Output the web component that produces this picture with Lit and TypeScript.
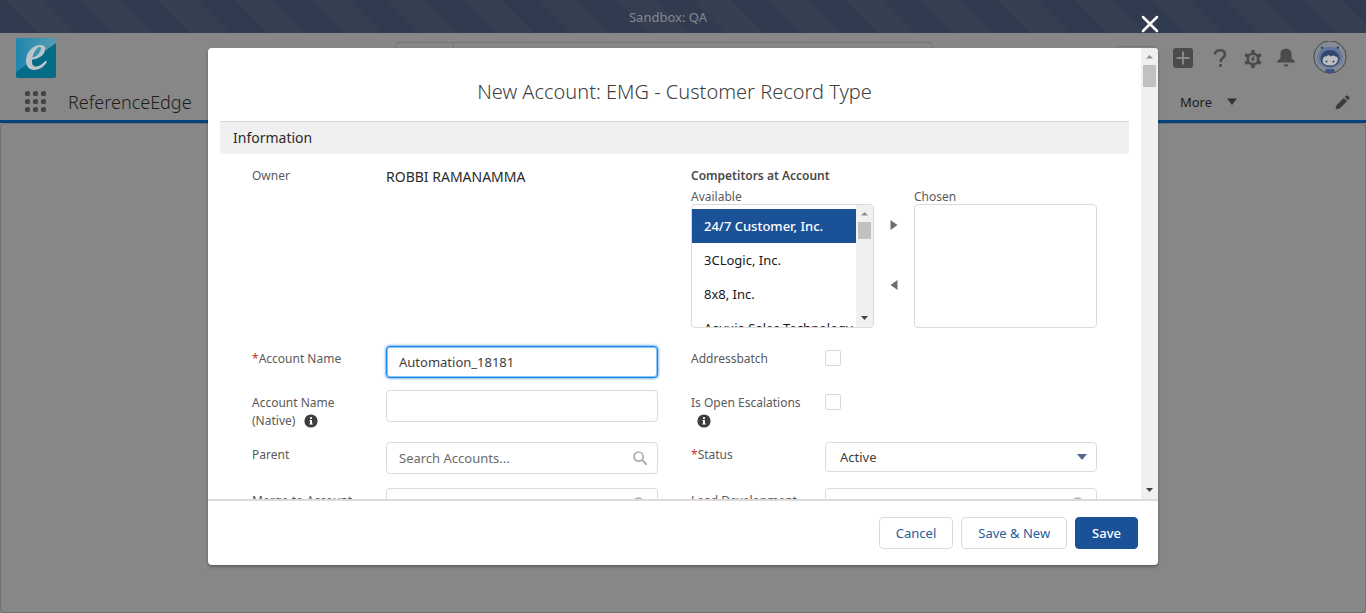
import { LitElement, html, css, svg } from "lit";
import { customElement } from "lit/decorators.js";

const up = html`<svg class="cap" viewBox="0 0 17 17" width="17" height="17"><path d="M5 10.500h7L8.500 7z" fill="#8f8f8f"/></svg>`;
const down = html`<svg class="cap" viewBox="0 0 17 17" width="17" height="17"><path d="M5 6h7l-3.500 4z" fill="#444"/></svg>`;
const info = html`<svg class="info" viewBox="0 0 14 14" width="14" height="14"><circle cx="7" cy="7" r="6.600" fill="#3e3e3c"/><path d="M6 3.200h2v1.700H6zM5.500 5.900H8v3.500h.7v1H5.400v-1H6V6.900h-.5z" fill="#fff"/></svg>`;
const lens = html`<svg class="lens" viewBox="0 0 14 14" width="14" height="14" fill="none" stroke="#b0adab"><circle cx="5.600" cy="5.600" r="4.600" stroke-width="1.700"/><path d="M9 9l4 4" stroke-width="2" stroke-linecap="round"/></svg>`;

@customElement("app-root")
export class AppRoot extends LitElement {
  static styles = css`
    :host { display: block; font-family: "Noto Sans", sans-serif; font-size: 13px; line-height: 18px; color: #3e3e3c; }
    * { box-sizing: border-box; }
    button, input, select { font: inherit; color: inherit; margin: 0; }
    button { border: 0; background: none; padding: 0; cursor: pointer; display: flex; align-items: center; justify-content: center; }
    .page { position: relative; height: 100vh; display: flex; flex-direction: column; background: #878787; overflow: hidden; }
    .band { height: 33px; display: flex; align-items: center; justify-content: center; padding-right: 30px; color: #85888d;
      background: repeating-linear-gradient(45deg, #303b4f 0 27px, #343f52 27px 54px); }
    .top { height: 50px; display: flex; align-items: center; padding: 0 19px 0 16px; }
    .logo { width: 40px; height: 40px; flex: none; }
    .search { flex: 0 1 538px; height: 34px; margin: 9px 0 0 339px; align-self: flex-start; border: 1px solid #767676; border-radius: 4px; display: flex; }
    .scope { width: 58px; border-right: 1px solid #767676; }
    .tools { display: flex; align-items: center; gap: 13px; margin-left: auto; }
    .fav { width: 41px; height: 24px; border: 1px solid #767676; border-radius: 4px; margin-right: 4px; }
    .add { margin-right: 4px; }
    .me { margin-left: 4px; }
    .nav { height: 40px; border-bottom: 3px solid #04427c; display: flex; align-items: center; padding: 0 14px 0 24px; color: #1d1d1d; }
    .app { font-size: 18px; font-weight: 300; padding-left: 20px; flex: 1; }
    .more { gap: 14px; margin-right: 94px; }
    .canvas { flex: 1; border: 1px solid #717171; border-radius: 4px; }
    .overlay { position: absolute; inset: 0; display: flex; flex-direction: column; align-items: center; padding: 48px 16px; }
    .close { position: absolute; left: 50%; top: 15px; margin-left: 458px; width: 18px; height: 18px; }
    .dialog { width: 100%; max-width: 950px; flex: 1; min-height: 0; background: #fff; border-radius: 4px; box-shadow: 0 2px 3px rgba(0,0,0,.3); display: flex; flex-direction: column; overflow: hidden; }
    .body { flex: 1; min-height: 0; display: flex; }
    .form { flex: 1; min-width: 0; overflow: hidden; padding: 0 12px; }
    .bar { width: 17px; background: #f0f0f0; display: flex; flex-direction: column; align-items: center; }
    .thumb { width: 13px; background: #c1c1c1; }
    .cap, .thumb { flex: none; }
    .space { flex: 1; }
    h2 { margin: 0; height: 74px; padding-top: 28px; line-height: 32px; font-size: 20px; font-weight: 300; text-align: center; border-bottom: 1px solid #d8d8d8; }
    h3 { margin: 0 0 12px; height: 32px; line-height: 32px; padding: 0 13px; background: #f0f0f0; border-radius: 0 0 4px 4px; font-size: 14px; font-weight: 400; color: #2b2b2b; }
    .grid { display: grid; grid-template-columns: 1fr 1fr; column-gap: 33px; padding: 0 32px; }
    .field { display: grid; grid-template-columns: 134px 1fr; }
    .label { font-size: 12px; color: #5a5a5a; padding: 4px 16px 0 0; }
    .static { padding-top: 1px; }
    .req { color: #c23934; }
    .r1 { height: 180px; } .r2 { height: 44px; } .r3 { height: 52px; } .r4 { height: 46px; }
    .info { vertical-align: -3px; margin-left: 6px; }
    .static + .owner { font-size: 14px; padding-top: 2px; color: #2b2b2b; }
    .box { width: 100%; height: 32px; border: 1px solid #dddbda; border-radius: 4px; padding: 0 12px; background: #fff; outline: 0; }
    .box::placeholder { color: #6b6b6b; opacity: 1; }
    .focus { border-color: #1589ee; box-shadow: 0 0 3px #0070d2, inset 0 0 0 1px #8ec5f5; }
    .wrap { position: relative; }
    .lens { position: absolute; right: 11px; top: 9px; }
    .pick { appearance: none; height: 30px; padding: 0 14px; }
    .tri { position: absolute; right: 10px; top: 12px; }
    .check { appearance: none; width: 16px; height: 16px; margin-top: 4px; border: 1px solid #dddbda; border-radius: 2px; background: #fff; }
    .group { border: 0; margin: 0; padding: 0; min-width: 0; }
    legend { padding: 0; font-size: 12px; font-weight: 600; line-height: 20px; color: #4a4a4a; }
    .duel { display: grid; grid-template-columns: 1fr 40px 1fr; }
    .cap-label { font-size: 12px; line-height: 18px; color: #5a5a5a; margin-top: 2px; display: block; }
    .list { height: 124px; border: 1px solid #dddbda; border-radius: 4px; display: flex; overflow: hidden; margin-top: -2px; }
    .items { list-style: none; margin: 0; padding: 4px 0; flex: 1; min-width: 0; overflow: hidden; color: #181818; }
    .item { height: 34px; line-height: 34px; padding-left: 12px; white-space: nowrap; overflow: hidden; }
    .sel { background: #1b5297; color: #fff; font-weight: 500; }
    .arrows { display: flex; flex-direction: column; gap: 44px; padding-top: 31px; align-items: center; }
    .arrow { width: 16px; height: 16px; }
    .foot { flex: none; height: 66px; border-top: 2px solid #dddbda; padding: 0 20px; display: flex; align-items: center; justify-content: flex-end; gap: 8px; }
    .btn { height: 32px; padding: 0 16px; border: 1px solid #dddbda; border-radius: 4px; background: #fff; color: #2a5d9c; }
    .brand { background: #1b5297; border-color: #1b5297; color: #fff; font-weight: 500; }
  `;

  search(id: string, label: string, text: string, row: string) {
    return html`<div class="field ${row}"><label class="label" for=${id}>${label}</label>
      <div class="wrap"><input class="box" id=${id} placeholder=${text}>${lens}</div></div>`;
  }

  render() {
    return html`
      <div class="page">
        <div class="band">Sandbox: QA</div>
        <header class="top">
          <svg class="logo" viewBox="0 0 40 40"><defs><linearGradient id="lg" x1="0" y1="0" x2="1" y2="0"><stop offset="0" stop-color="#1f86ae"/><stop offset="1" stop-color="#5a9cb6"/></linearGradient></defs>
            <rect width="40" height="40" rx="2" fill="#056c88"/><path d="M2 0H38Q40 0 40 2V5L0 34V2Q0 0 2 0z" fill="url(#lg)"/>
            <path fill="#bcc6ca" fill-rule="evenodd" d="M31 24C28 29 23 32 18 32C13 32 10 28 10 23C10 14 17 7 24 7C28 7 30 9 29 12C28 18 22 21 16 21.500C15.500 26 17 28.500 20 28.500C24 28.500 27 25 30 22.500zM16.500 19.500C21 18.500 25 14 25 10.500C25 8.500 23 8.500 21 10.500C18.500 13 17 16 16.500 19.500z"/></svg>
          <div class="search"><div class="scope"></div></div>
          <div class="tools">
            <button class="fav" aria-label="Favorites"></button>
            <button class="add" aria-label="Create"><svg viewBox="0 0 20 20" width="20" height="20"><rect width="20" height="20" rx="3" fill="#4b4b4b"/><path d="M10 3.500v13M3.500 10h13" stroke="#888" stroke-width="2"/></svg></button>
            <button aria-label="Help"><svg viewBox="0 0 20 20" width="20" height="20" fill="none" stroke="#4b4b4b" stroke-width="2.600"><path d="M5 6.500C5 3.500 7 2.300 10 2.300C13 2.300 15 4 15 6.500C15 10 10.500 9.500 10.500 14"/><path d="M10.500 16v3"/></svg></button>
            <button aria-label="Setup"><svg viewBox="0 0 20 20" width="20" height="20"><circle cx="10" cy="11" r="5.300" fill="none" stroke="#4b4b4b" stroke-width="2.600"/><g stroke="#4b4b4b" stroke-width="3.600">${[0, 60, 120, 180, 240, 300].map(a => svg`<path d="M10 5.500V2" transform="rotate(${a} 10 11)"/>`)}</g><path d="M11 7.500l-3.500 4h2l-1 3.200 4-4.200h-2l1.200-3z" fill="#4b4b4b"/></svg></button>
            <button aria-label="Notifications"><svg viewBox="0 0 20 20" width="20" height="20" fill="#4b4b4b"><path d="M10 .8C6.500.8 4.500 3 4.500 6v3.500c0 2-3.500 2.500-3.500 5h18c0-2.500-3.500-3-3.500-5V6C15.500 3 13.500.8 10 .8zM7.500 16.500h5q-.8 2.300-2.500 2.300t-2.500-2.300z"/></svg></button>
            <button class="me" aria-label="Profile"><svg viewBox="0 1 34 34" width="34" height="34"><circle cx="17" cy="17" r="15.300" fill="#858b94"/><circle cx="17" cy="17" r="16.200" fill="none" stroke="#45484c"/><ellipse cx="17" cy="17.500" rx="13" ry="10.500" fill="#6b7c98"/><path d="M8 14L8 6l7 4zM26 14L26 6l-7 4z" fill="#33486e"/><path d="M8 9q9-4 18 0l2 10q-11 12-22 0z" fill="#62759a"/><ellipse cx="17" cy="18.500" rx="9.500" ry="8.500" fill="#32466c"/><path d="M9.500 20.500q1-5 4-4 2-3 4 0 3-2 5 0 2.500 0 2.500 3-1 6-8 6t-7.500-5z" fill="#bdbdbd"/><circle cx="13.500" cy="21.500" r="1" fill="#293d5e"/><circle cx="20.500" cy="21.500" r="1" fill="#293d5e"/><path d="M13 29h8l1 3.200q-5 1.500-10 0z" fill="#3c5480"/></svg></button>
          </div>
        </header>
        <nav class="nav">
          <button aria-label="App launcher"><svg viewBox="0 0 24 24" width="24" height="24" fill="#444">${[3.5, 11.5, 19.5].map(y => [3.5, 11.5, 19.5].map(x => svg`<circle cx=${x} cy=${y} r="2.600"/>`))}</svg></button>
          <span class="app">ReferenceEdge</span>
          <button class="more">More <svg viewBox="0 0 12 8" width="12" height="8"><path d="M1 .5h10L6 7z" fill="#333"/></svg></button>
          <button aria-label="Edit"><svg viewBox="0 0 20 20" width="20" height="20" fill="#3a3a3a"><path d="M3.500 17.500l1-4.200 7.200-7.200 3.200 3.200-7.200 7.200zM12.800 5l1.200-1.200q1-1 2.700.6 1.500 1.600.5 2.600L16 8.200z"/></svg></button>
        </nav>
        <main class="canvas"></main>

        <div class="overlay">
          <button class="close" aria-label="Close"><svg viewBox="0 0 18 18" width="18" height="18"><path d="M2 2l14 14M16 2L2 16" stroke="#fff" stroke-width="2.500" stroke-linecap="round"/></svg></button>
          <section class="dialog" role="dialog" aria-labelledby="title">
            <div class="body">
              <div class="form">
                <h2 id="title">New Account: EMG - Customer Record Type</h2>
                <h3>Information</h3>
                <div class="grid">
                  <div class="field r1"><span class="label static">Owner</span><span class="owner">ROBBI RAMANAMMA</span></div>
                  <fieldset class="group r1"><legend>Competitors at Account</legend>
                    <div class="duel">
                      <div><span class="cap-label" id="av">Available</span>
                        <div class="list"><ul class="items" role="listbox" aria-labelledby="av">
                          <li class="item sel" role="option" aria-selected="true">24/7 Customer, Inc.</li><li class="item" role="option">3CLogic, Inc.</li><li class="item" role="option">8x8, Inc.</li><li class="item" role="option">Aayuja Sales Technology</li></ul>
                          <div class="bar">${up}<div class="thumb" style="height:17px"></div><div class="space"></div>${down}</div></div></div>
                      <div class="arrows">
                        <button class="arrow" aria-label="Add"><svg viewBox="0 0 16 16" width="16" height="16"><path d="M4.500 3l7 5-7 5z" fill="#706e6b"/></svg></button>
                        <button class="arrow" aria-label="Remove"><svg viewBox="0 0 16 16" width="16" height="16"><path d="M11.500 3l-7 5 7 5z" fill="#706e6b"/></svg></button></div>
                      <div><span class="cap-label" id="ch">Chosen</span><div class="list" role="listbox" aria-labelledby="ch"></div></div>
                    </div></fieldset>
                  <div class="field r2"><label class="label" for="name"><span class="req">*</span>Account Name</label><input id="name" class="box focus" value="Automation_18181"></div>
                  <div class="field r2"><label class="label" for="ab">Addressbatch</label><input id="ab" class="check" type="checkbox"></div>
                  <div class="field r3"><label class="label" for="native">Account Name (Native) ${info}</label><input id="native" class="box"></div>
                  <div class="field r3"><label class="label" for="esc">Is Open Escalations ${info}</label><input id="esc" class="check" type="checkbox"></div>
                  ${this.search("parent", "Parent", "Search Accounts...", "r4")}
                  <div class="field r4"><label class="label" for="status"><span class="req">*</span>Status</label><div class="wrap"><select id="status" class="box pick"><option>Active</option></select><svg class="tri" viewBox="0 0 10 6" width="10" height="6"><path d="M0 0h10L5 6z" fill="#54698d"/></svg></div></div>
                  ${this.search("merge", "Merge to Account", "", "r4")}
                  ${this.search("dev", "Lead Development", "", "r4")}
                </div>
              </div>
              <div class="bar">${up}<div class="thumb" style="height:22px"></div><div class="space"></div>${down}</div>
            </div>
            <footer class="foot"><button class="btn">Cancel</button><button class="btn">Save &amp; New</button><button class="btn brand">Save</button></footer>
          </section>
        </div>
      </div>`;
  }
}
